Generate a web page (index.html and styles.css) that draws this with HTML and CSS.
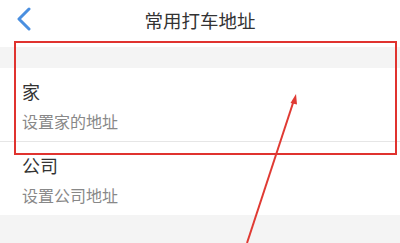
FILE: index.html
```html
<!DOCTYPE html>
<html lang="zh-CN">

<head>
   <meta charset="UTF-8">
   <meta name="viewport" content="width=device-width, initial-scale=1.0">
   <title>常用打车地址</title>

   <link rel="stylesheet" href="styles.css">
</head>

<body>
   <div class="page">
      <div class="nav__bar">
         <svg class="back__icon" width="16" height="24" viewBox="0 0 16 24">
            <path d="M13 2 L3 12 L13 22" fill="none" stroke="#4a8fe0" stroke-width="3" stroke-linecap="round"
               stroke-linejoin="round" />
         </svg>
         <div class="nav__title">常用打车地址</div>
      </div>

      <div class="gap"></div>

      <div class="address__list">
         <div class="address">
            <div class="address__name">家</div>
            <div class="address__hint">设置家的地址</div>
         </div>
         <div class="address">
            <div class="address__name">公司</div>
            <div class="address__hint">设置公司地址</div>
         </div>
      </div>

      <div class="footer__gap"></div>

      <!-- annotation drawn on top of the screenshot -->
      <div class="highlight"></div>
      <svg class="pointer" width="400" height="243" viewBox="0 0 400 243">
         <line x1="294" y1="100" x2="247" y2="243" stroke="#e03a33" stroke-width="2" />
         <polygon points="296,94 290.5,103 297,104.5" fill="#e03a33" />
      </svg>
   </div>
</body>

</html>
```

FILE: styles.css
```css
* {
   box-sizing: border-box;
   margin: 0;
   padding: 0;
}

body {
   font-family: "Noto Sans CJK SC", "Noto Sans", sans-serif;
   background-color: #fff;
   color: #333;
}

.page {
   position: relative;
   width: 400px;
   height: 243px;
   overflow: hidden;
   display: flex;
   flex-direction: column;
}

.nav__bar {
   position: relative;
   height: 47px;
   display: flex;
   align-items: center;
   justify-content: center;
   padding-bottom: 8px;
}

.back__icon {
   position: absolute;
   left: 16px;
   top: 7px;
}

.nav__title {
   font-size: 18.5px;
   line-height: 24px;
   color: #333;
}

.gap {
   height: 21px;
   background-color: #f4f4f4;
}

.address {
   padding: 11px 22px 9px;
   border-bottom: 1px solid #e6e6e6;
}

.address:last-child {
   border-bottom: none;
}

.address__name {
   font-size: 18px;
   line-height: 24px;
   color: #333;
}

.address__hint {
   margin-top: 7px;
   font-size: 16px;
   line-height: 22px;
   color: #888;
}

.footer__gap {
   flex: 1;
   background-color: #f4f4f4;
}

.highlight {
   position: absolute;
   left: 14px;
   top: 41px;
   width: 383px;
   height: 114px;
   border: 2px solid #e0332f;
}

.pointer {
   position: absolute;
   left: 0;
   top: 0;
}
```
